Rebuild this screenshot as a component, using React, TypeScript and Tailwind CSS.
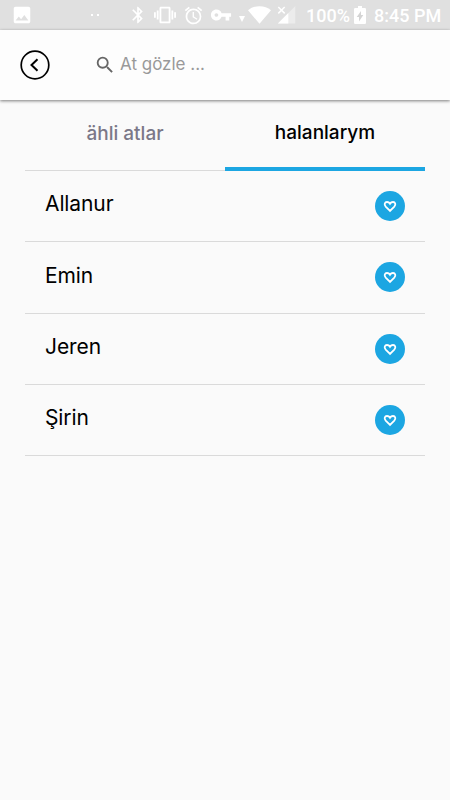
import React from 'react';
import { MdAlarm, MdBluetooth, MdImage, MdSearch, MdVibration, MdVpnKey } from 'react-icons/md';

const names = [
  { name: 'Allanur', tracking: 'tracking-[-0.1px]' },
  { name: 'Emin', tracking: 'tracking-[-0.1px]' },
  { name: 'Jeren', tracking: 'tracking-[-0.1px]' },
  { name: 'Şirin', tracking: 'tracking-[-0.1px]' },
];

function StatusBar() {
  return (
    <div className="flex h-[30px] items-center bg-[#e0e0e0] font-['Roboto',sans-serif] text-[18px] font-medium text-white">
      <MdImage className="ml-[11px] size-[22px] shrink-0" />
      <div className="ml-[58px] flex gap-1">
        <span className="size-[2px] bg-white" />
        <span className="size-[2px] bg-white" />
      </div>
      <MdBluetooth className="ml-[29px] size-[20px] shrink-0" />
      <MdVibration className="ml-[6px] size-[22px] shrink-0" />
      <MdAlarm className="ml-[7px] size-[21px] shrink-0" />
      <MdVpnKey className="ml-[6px] size-[22px] shrink-0" />
      <svg className="mt-[8px] ml-[7px] h-[6px] w-[6px] shrink-0" viewBox="0 0 6 6" fill="currentColor">
        <path d="M0 0h6L3 6z" />
      </svg>
      <svg className="ml-[3px] h-[18px] w-[23px] shrink-0" viewBox="0 0 23 18" fill="currentColor">
        <path d="M0 4.2C3 1.7 7 .2 11.5.2S20 1.7 23 4.2L11.5 17.8z" />
      </svg>
      <svg className="ml-[6px] h-[18px] w-[19px] shrink-0" viewBox="0 0 19 18">
        <path d="M18.3 0v17.5H.8z" fill="#fff" opacity=".38" />
        <path d="M11.3 7v10.500H.8z" fill="#fff" />
        <path d="M0 0h10v7.500L8 9.500H0z" fill="#e0e0e0" />
        <path d="M1.300 1l6.400 6.400M7.700 1L1.300 7.400" stroke="#fff" strokeWidth="1.500" />
      </svg>
      <span className="ml-[10px] w-[43px] whitespace-nowrap">100%</span>
      <svg className="ml-[5px] h-[18px] w-[12px] shrink-0" viewBox="0 0 12 18">
        <path d="M4 0h4v2h2.800Q12 2 12 3.200v13.600Q12 18 10.800 18H1.200Q0 18 0 16.800V3.200Q0 2 1.200 2H4z" fill="#fff" />
        <path d="M7 5v4h2.300L5 15.500V11H2.700z" fill="#d4d4d4" />
      </svg>
      <span className="ml-[8px] whitespace-nowrap">8:45 PM</span>
    </div>
  );
}

function Header() {
  return (
    <header className="flex h-[70px] items-center bg-[#fdfdfd] shadow-[0_1px_3px_rgba(0,0,0,0.5)]">
      <button className="ml-5 size-[30px]" aria-label="Back">
        <svg viewBox="0 0 30 30" fill="none" stroke="#000" strokeWidth="2">
          <circle cx="15" cy="15" r="13.800" strokeWidth="1.700" />
          <path d="M17.500 9.300L11.500 15l6 5.700" />
        </svg>
      </button>
      <label className="ml-[44px] flex items-center">
        <MdSearch className="size-[22px] text-[#666]" />
        <input
          className="ml-1 w-[200px] bg-transparent text-[17px] outline-none placeholder:text-[#999]"
          placeholder="At gözle ..."
        />
      </label>
    </header>
  );
}

function LikeButton() {
  return (
    <button className="flex size-[30px] items-center justify-center rounded-full bg-[#1ca6e2]" aria-label="Like">
      <svg className="size-[14px]" viewBox="0 0 14 14" fill="none" stroke="#fff" strokeWidth="1.800">
        <path d="M7 11.900L2.700 7.600C.7 5.500 1.800 3 4 3c1.400 0 2.400.8 3 1.800C7.600 3.800 8.600 3 10 3c2.200 0 3.300 2.500 1.300 4.600z" />
      </svg>
    </button>
  );
}

export default function App() {
  return (
    <div className="h-[800px] w-[450px] overflow-hidden bg-[#fafafa] font-['Inter','Open_Sans',sans-serif] text-black">
      <StatusBar />
      <Header />
      <main className="px-[25px]">
        {/* Tabs */}
        <div className="grid h-[71px] grid-cols-2 border-b border-[#dadada] text-[19px] font-medium">
          <button className="pb-px text-[#7b7888]">ähli atlar</button>
          <button className="-mb-px border-b-4 border-[#1ca6e2]">halanlarym</button>
        </div>

        {/* Favourite names */}
        <ul>
          {names.map(({ name, tracking }) => (
            <li key={name} className="flex h-[71.250px] items-center justify-between border-b border-[#dadada] px-5">
              <span className={`pb-1 text-[21px] ${tracking}`}>{name}</span>
              <LikeButton />
            </li>
          ))}
        </ul>
      </main>
    </div>
  );
}
